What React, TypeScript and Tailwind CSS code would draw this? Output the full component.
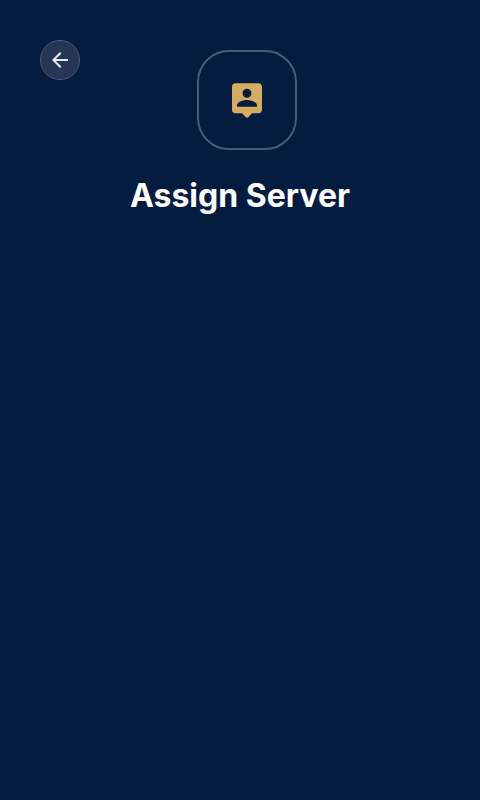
import { MdArrowBack } from "react-icons/md";

function PersonPinIcon() {
  return (
    <svg viewBox="0 0 24 24" className="size-10" fill="currentColor" aria-hidden="true">
      <path d="M19 2H5c-1.1 0-2 .9-2 2v14c0 1.1.9 2 2 2h4l2.29 2.29c.39.39 1.02.39 1.41 0L15 20h4c1.1 0 2-.9 2-2V4c0-1.1-.9-2-2-2zm-7 3.3c1.49 0 2.7 1.21 2.7 2.7s-1.21 2.7-2.7 2.7S9.3 9.49 9.3 8s1.21-2.7 2.7-2.7zM18 16H6v-.9c0-2 4-3.1 6-3.1s6 1.1 6 3.1v.9z" />
    </svg>
  );
}

export default function App() {
  return (
    <div className="flex h-screen w-full flex-col bg-[#041c40] px-10 pt-10 font-['Inter',sans-serif]">
      <header className="flex items-start">
        <button
          aria-label="Back"
          className="flex size-10 items-center justify-center rounded-full border border-[#4d5c76] bg-[#253657] text-[#e9ebee]"
        >
          <MdArrowBack size={24} />
        </button>
        <div className="mt-2.5 ml-[117px] flex size-[100px] items-center justify-center rounded-[32px] border-2 border-[#4a5b76] text-[#d6ac60]">
          <PersonPinIcon />
        </div>
      </header>
      <h1 className="mt-[26px] text-center text-[32px] leading-[39px] font-bold text-white">
        Assign Server
      </h1>
    </div>
  );
}
